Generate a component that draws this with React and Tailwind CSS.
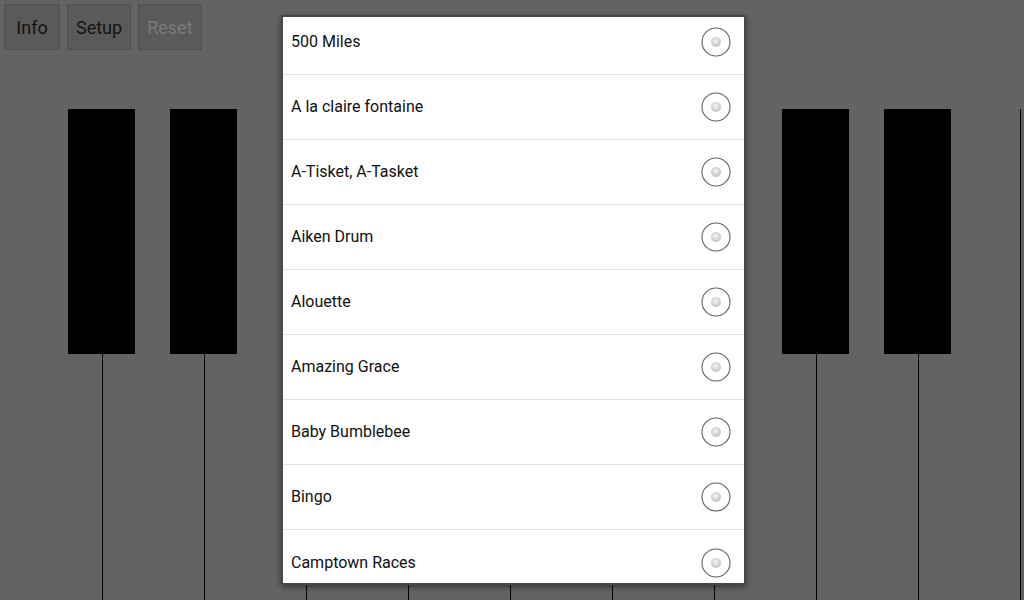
import React from 'react'

const songs = [
  '500 Miles',
  'A la claire fontaine',
  'A-Tisket, A-Tasket',
  'Aiken Drum',
  'Alouette',
  'Amazing Grace',
  'Baby Bumblebee',
  'Bingo',
  'Camptown Races',
]

// black keys sit over the white key lines at 102, 204, 408, 510, 612, 816, 918
const blackKeys = [68, 170, 374, 476, 578, 782, 884]

function Radio() {
  return (
    <svg width="30" height="30" viewBox="0 0 30 30" className="shrink-0">
      <defs>
        <radialGradient id="dot" cx="45%" cy="40%" r="60%">
          <stop offset="0%" stopColor="#f6f6f6" />
          <stop offset="100%" stopColor="#c2c2c2" />
        </radialGradient>
      </defs>
      <circle cx="15" cy="15" r="14" fill="none" stroke="#606060" strokeWidth="1.1" />
      <circle cx="15" cy="15" r="4.8" fill="url(#dot)" stroke="#cfcfcf" strokeWidth="0.6" />
    </svg>
  )
}

function TopButton({ label, disabled }) {
  return (
    <button
      className={
        'h-[46px] min-w-[56px] px-[8px] bg-[#5a5a5a] border border-[#505050] text-[18px] ' +
        (disabled ? 'text-[#7a7a7a]' : 'text-[#141414]')
      }
    >
      {label}
    </button>
  )
}

export default function App() {
  return (
    <div
      className="relative w-[1024px] h-[600px] overflow-hidden bg-[#636363]"
      style={{ fontFamily: 'Roboto, "Liberation Sans", sans-serif' }}
    >
      <div className="flex gap-[7px] pl-[4px] pt-[4px] h-[109px]">
        <TopButton label="Info" />
        <TopButton label="Setup" />
        <TopButton label="Reset" disabled />
      </div>

      {/* keyboard */}
      <div className="relative flex h-[491px]">
        {Array.from({ length: 11 }).map((_, i) => (
          <div
            key={i}
            className={'w-[102px] h-full shrink-0 ' + (i > 0 ? 'border-l border-black' : '')}
          />
        ))}
        {blackKeys.map((x) => (
          <div key={x} className="absolute top-0 w-[67px] h-[245px] bg-black" style={{ left: x }} />
        ))}
      </div>

      {/* song picker dialog */}
      <div className="absolute left-[281px] top-[15px] w-[465px] h-[570px] border-2 border-[#474747] bg-white overflow-hidden shadow-[0_2px_6px_rgba(0,0,0,0.45)]">
        <div className="-mt-[7px]">
          {songs.map((s, i) => (
            <div
              key={s}
              className={
                'h-[65px] flex items-center justify-between pl-[8px] pr-[13px] ' +
                (i < songs.length - 1 ? 'border-b border-[#e4e4e4]' : '')
              }
            >
              <span className="text-[16px] text-[#111]">{s}</span>
              <Radio />
            </div>
          ))}
        </div>
      </div>
    </div>
  )
}
